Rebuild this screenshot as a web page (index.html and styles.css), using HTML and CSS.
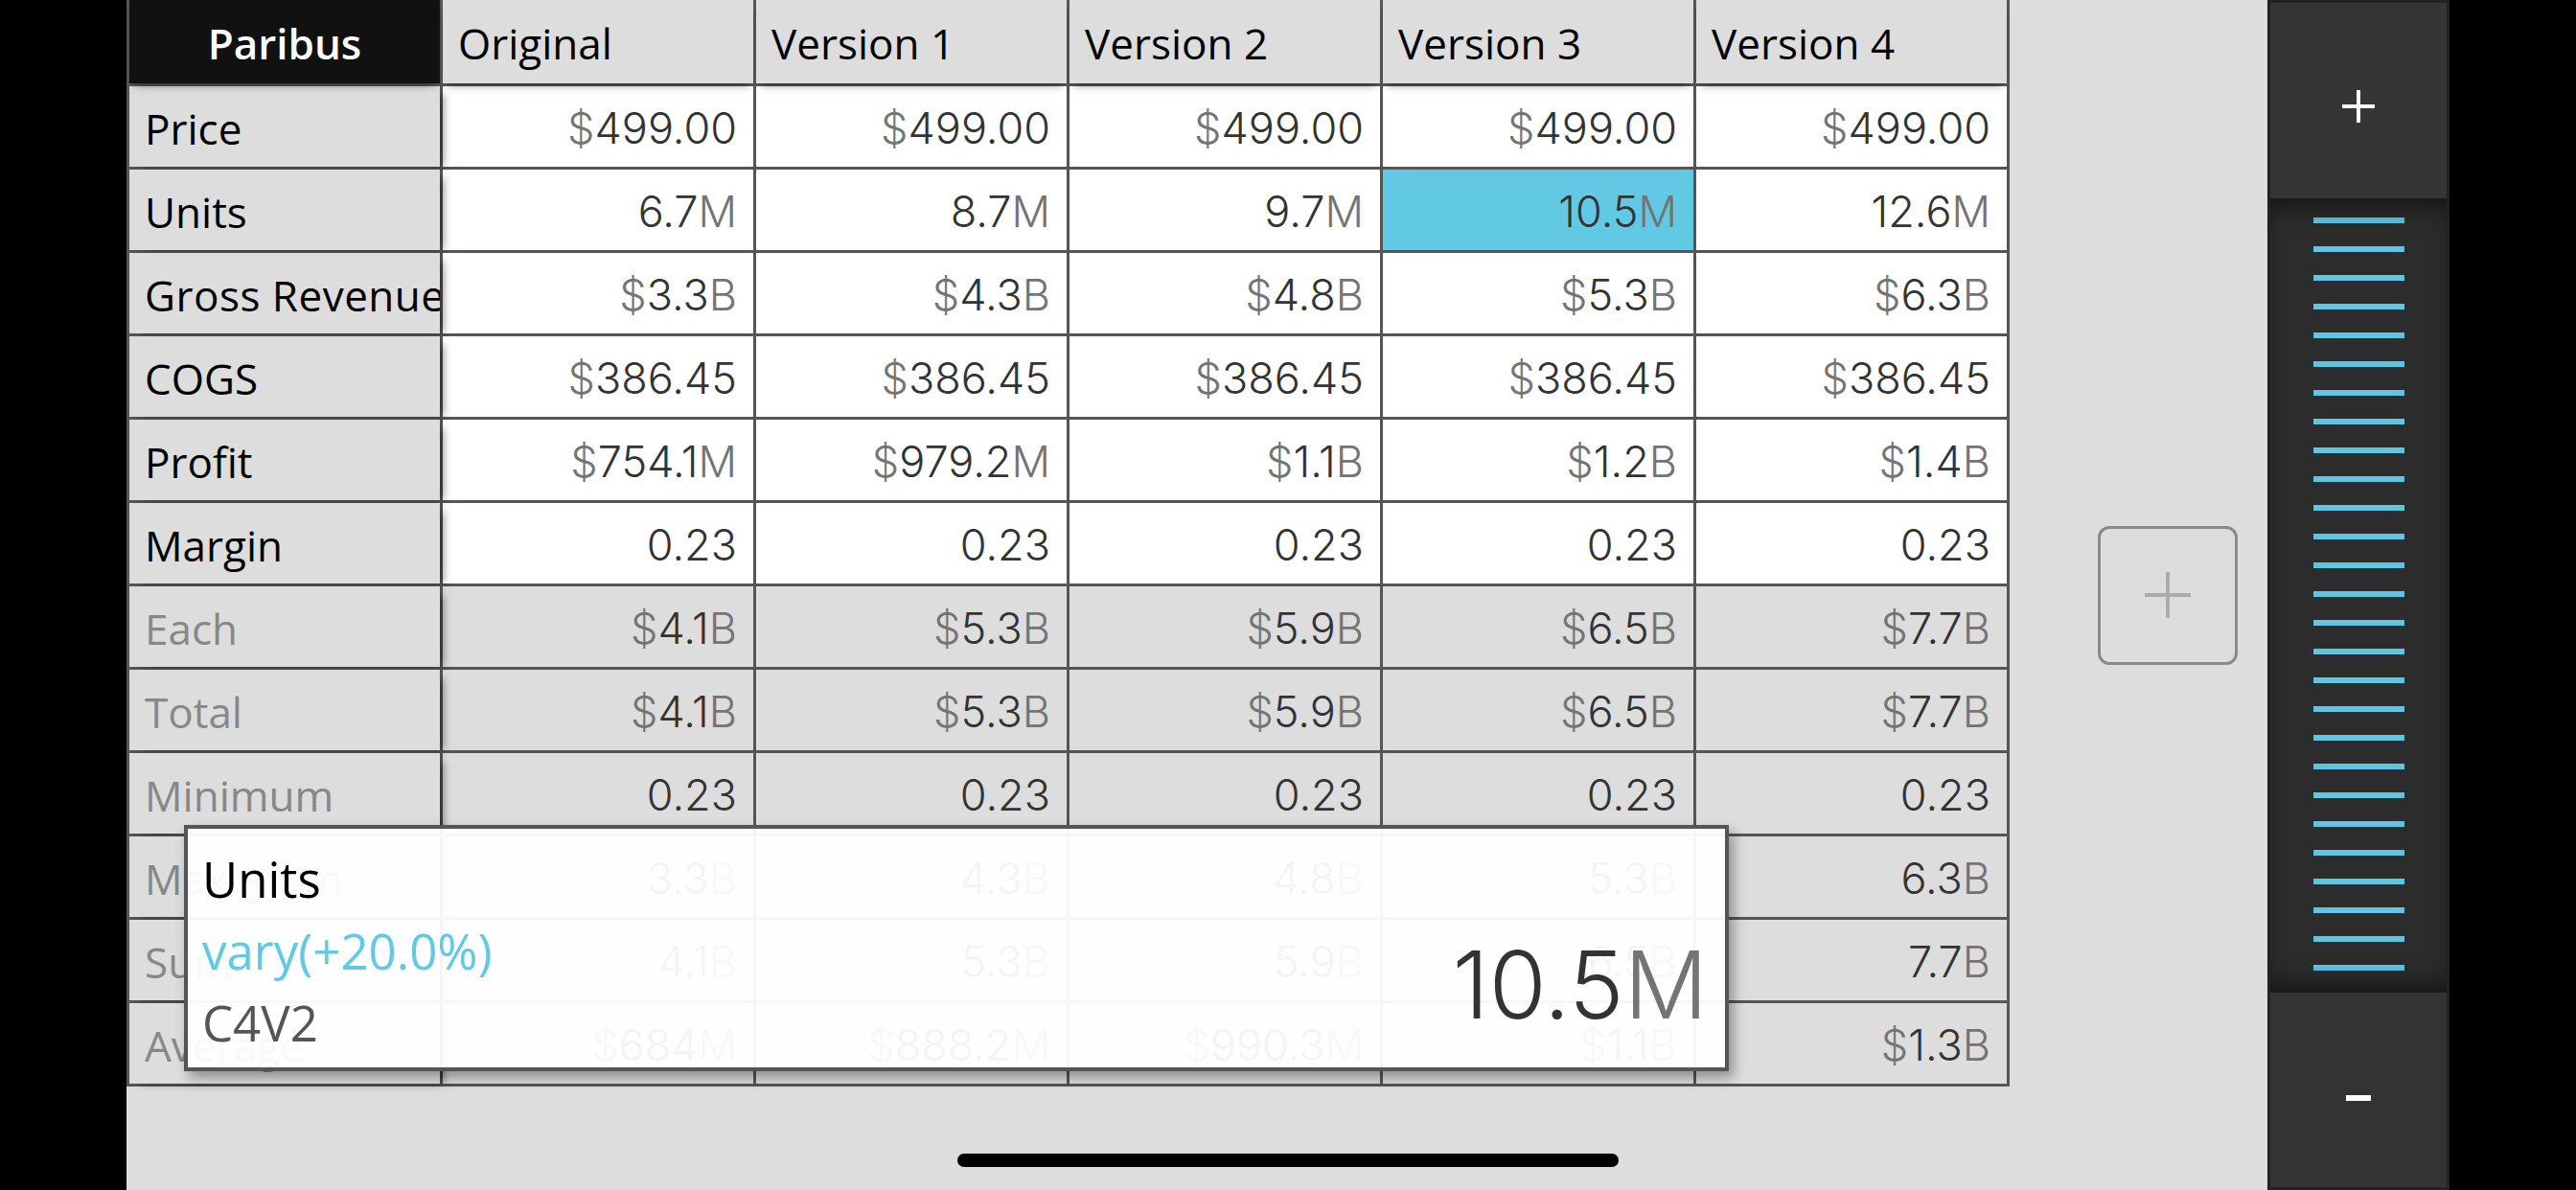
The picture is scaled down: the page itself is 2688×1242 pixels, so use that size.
FILE: index.html
```html
<!DOCTYPE html>
<html>
<head>
<meta charset="utf-8">
<link rel="stylesheet" href="styles.css">
</head>
<body>
<div class="screen">
  <div class="edge"></div>
  <main class="main">
    <div class="grid">
      <div class="cell brand">Paribus</div>
      <div class="cell hd">Original</div>
      <div class="cell hd">Version 1</div>
      <div class="cell hd">Version 2</div>
      <div class="cell hd">Version 3</div>
      <div class="cell hd">Version 4</div>

      <div class="cell lab">Price</div>
      <div class="cell num"><span class="u">$</span>499.00</div>
      <div class="cell num"><span class="u">$</span>499.00</div>
      <div class="cell num"><span class="u">$</span>499.00</div>
      <div class="cell num"><span class="u">$</span>499.00</div>
      <div class="cell num"><span class="u">$</span>499.00</div>

      <div class="cell lab">Units</div>
      <div class="cell num">6.7<span class="u">M</span></div>
      <div class="cell num">8.7<span class="u">M</span></div>
      <div class="cell num">9.7<span class="u">M</span></div>
      <div class="cell num sel">10.5<span class="u">M</span></div>
      <div class="cell num">12.6<span class="u">M</span></div>

      <div class="cell lab wide">Gross Revenue</div>
      <div class="cell num"><span class="u">$</span>3.3<span class="u">B</span></div>
      <div class="cell num"><span class="u">$</span>4.3<span class="u">B</span></div>
      <div class="cell num"><span class="u">$</span>4.8<span class="u">B</span></div>
      <div class="cell num"><span class="u">$</span>5.3<span class="u">B</span></div>
      <div class="cell num"><span class="u">$</span>6.3<span class="u">B</span></div>

      <div class="cell lab">COGS</div>
      <div class="cell num"><span class="u">$</span>386.45</div>
      <div class="cell num"><span class="u">$</span>386.45</div>
      <div class="cell num"><span class="u">$</span>386.45</div>
      <div class="cell num"><span class="u">$</span>386.45</div>
      <div class="cell num"><span class="u">$</span>386.45</div>

      <div class="cell lab">Profit</div>
      <div class="cell num"><span class="u">$</span>754.1<span class="u">M</span></div>
      <div class="cell num"><span class="u">$</span>979.2<span class="u">M</span></div>
      <div class="cell num"><span class="u">$</span>1.1<span class="u">B</span></div>
      <div class="cell num"><span class="u">$</span>1.2<span class="u">B</span></div>
      <div class="cell num"><span class="u">$</span>1.4<span class="u">B</span></div>

      <div class="cell lab">Margin</div>
      <div class="cell num">0.23</div>
      <div class="cell num">0.23</div>
      <div class="cell num">0.23</div>
      <div class="cell num">0.23</div>
      <div class="cell num">0.23</div>

      <div class="cell lab dim">Each</div>
      <div class="cell num g"><span class="u">$</span>4.1<span class="u">B</span></div>
      <div class="cell num g"><span class="u">$</span>5.3<span class="u">B</span></div>
      <div class="cell num g"><span class="u">$</span>5.9<span class="u">B</span></div>
      <div class="cell num g"><span class="u">$</span>6.5<span class="u">B</span></div>
      <div class="cell num g"><span class="u">$</span>7.7<span class="u">B</span></div>

      <div class="cell lab dim">Total</div>
      <div class="cell num g"><span class="u">$</span>4.1<span class="u">B</span></div>
      <div class="cell num g"><span class="u">$</span>5.3<span class="u">B</span></div>
      <div class="cell num g"><span class="u">$</span>5.9<span class="u">B</span></div>
      <div class="cell num g"><span class="u">$</span>6.5<span class="u">B</span></div>
      <div class="cell num g"><span class="u">$</span>7.7<span class="u">B</span></div>

      <div class="cell lab dim">Minimum</div>
      <div class="cell num g">0.23</div>
      <div class="cell num g">0.23</div>
      <div class="cell num g">0.23</div>
      <div class="cell num g">0.23</div>
      <div class="cell num g">0.23</div>

      <div class="cell lab dim">Maximum</div>
      <div class="cell num g">3.3<span class="u">B</span></div>
      <div class="cell num g">4.3<span class="u">B</span></div>
      <div class="cell num g">4.8<span class="u">B</span></div>
      <div class="cell num g">5.3<span class="u">B</span></div>
      <div class="cell num g">6.3<span class="u">B</span></div>

      <div class="cell lab dim">Sum</div>
      <div class="cell num g">4.1<span class="u">B</span></div>
      <div class="cell num g">5.3<span class="u">B</span></div>
      <div class="cell num g">5.9<span class="u">B</span></div>
      <div class="cell num g">6.5<span class="u">B</span></div>
      <div class="cell num g">7.7<span class="u">B</span></div>

      <div class="cell lab dim">Average</div>
      <div class="cell num g"><span class="u">$</span>684<span class="u">M</span></div>
      <div class="cell num g"><span class="u">$</span>888.2<span class="u">M</span></div>
      <div class="cell num g"><span class="u">$</span>990.3<span class="u">M</span></div>
      <div class="cell num g"><span class="u">$</span>1.1<span class="u">B</span></div>
      <div class="cell num g"><span class="u">$</span>1.3<span class="u">B</span></div>
    </div>

    <button class="add" type="button" aria-label="Add version">
      <svg width="52" height="52" viewBox="0 0 52 52"><path d="M26 2 V50 M2 26 H50" stroke="#acacac" stroke-width="4" fill="none"/></svg>
    </button>

    <div class="tip">
      <div class="tip-lines">
        <div class="t1">Units</div>
        <div class="t2">vary(+20.0%)</div>
        <div class="t3">C4V2</div>
      </div>
      <div class="tip-big">10.5<span class="u">M</span></div>
    </div>
  </main>
  <aside class="panel">
    <div class="pbtn plus">
      <svg width="34" height="34" viewBox="0 0 34 34"><path d="M17 0 V34 M0 17 H34" stroke="#fff" stroke-width="4" fill="none"/></svg>
    </div>
    <div class="slider"></div>
    <div class="pbtn minus">
      <svg width="26" height="6" viewBox="0 0 26 6"><rect x="0" y="0" width="26" height="6" fill="#fff"/></svg>
    </div>
  </aside>
  <div class="edge fill"></div>
  <div class="home"></div>
</div>
</body>
</html>
```

FILE: styles.css
```css
* { box-sizing: border-box; }
html, body { margin: 0; padding: 0; background: #000; }
body { font-family: "Open Sans", "Liberation Sans", sans-serif; }

.screen {
  position: relative;
  width: 2688px;
  height: 1242px;
  display: flex;
  overflow: hidden;
  background: #000;
}
.edge { width: 132px; flex: none; background: #000; }
.edge.fill { flex: 1; }

.main {
  position: relative;
  width: 2234px;
  flex: none;
  background: #dddddd;
  display: flex;
  align-items: flex-start;
}

.grid {
  display: grid;
  grid-template-columns: repeat(6, 324px);
  grid-template-rows: 87px repeat(12, 84px);
  gap: 3px;
  padding: 0 3px 3px 3px;
  background: #555;
  flex: none;
}

.cell {
  display: flex;
  align-items: center;
  font-size: 44px;
  overflow: hidden;
  white-space: nowrap;
  background: #fff;
  padding: 3px 18px 0 16px;
}
.hd {
  position: relative;
  z-index: 3;
  background: #dddddd;
  color: #000;
  box-shadow: 0 7px 8px -5px rgba(0,0,0,.45);
}
.brand {
  position: relative;
  z-index: 4;
  background: #111;
  color: #fff;
  font-weight: 600;
  justify-content: center;
  padding: 3px 0 0 0;
  box-shadow: 0 7px 8px -5px rgba(0,0,0,.45);
}
.lab {
  position: relative;
  z-index: 2;
  background: #dddddd;
  color: #000;
  box-shadow: 8px 4px 9px -5px rgba(0,0,0,.5);
}
.lab.wide { letter-spacing: 0.5px; }
.lab.dim { color: #888; }
.num {
  justify-content: flex-end;
  font-family: "Inter", "Open Sans", sans-serif;
  font-size: 45px;
  color: #333;
  font-weight: 300;
  font-variant-numeric: proportional-nums;
  padding-right: 17px;
}
.num.g { background: #dddddd; }
.num.sel { background: #62c9e5; }
.u { color: #747474; }

.add {
  align-self: center;
  margin-left: 92px;
  width: 146px;
  height: 145px;
  border: 3px solid #8a8a8a;
  border-radius: 12px;
  background: transparent;
  display: flex;
  align-items: center;
  justify-content: center;
  padding: 0;
}

.tip {
  position: absolute;
  left: 60px;
  top: 861px;
  width: 1612px;
  height: 257px;
  z-index: 10;
  border: 4px solid #555;
  background: rgba(255,255,255,.95);
  box-shadow: 5px 7px 12px rgba(0,0,0,.35);
  display: flex;
  justify-content: space-between;
  align-items: flex-end;
  padding: 15px 18px 0 15px;
}
.tip-lines {
  align-self: flex-start;
  font-size: 51px;
  line-height: 75px;
}
.t1 { color: #000; }
.t2 { color: #62c9e5; }
.t3 { color: #555; }
.tip-big {
  font-family: "Inter", "Open Sans", sans-serif;
  font-size: 97px;
  line-height: 1;
  font-weight: 300;
  color: #333;
  padding-bottom: 38px;
}

.panel {
  width: 190px;
  flex: none;
  background: #222;
  padding: 3px;
  display: flex;
  flex-direction: column;
}
.pbtn {
  flex: none;
  background: #353535;
  display: flex;
  align-items: center;
  justify-content: center;
}
.plus { height: 204px; padding-top: 12px; }
.minus { height: 203px; padding-top: 16px; background: #333; }
.slider {
  flex: 1;
  background-color: #2c2c2c;
  background-image: repeating-linear-gradient(to bottom, transparent 0 20px, #5fc5e3 20px 26px, transparent 26px 30px);
  background-size: 95px 100%;
  background-position: center top;
  background-repeat: no-repeat;
  box-shadow: inset 0 22px 26px -14px rgba(0,0,0,.55), inset 0 -22px 26px -14px rgba(0,0,0,.55);
}

.home {
  position: absolute;
  left: 999px;
  top: 1204px;
  width: 690px;
  height: 14px;
  border-radius: 7px;
  background: #000;
}
```
